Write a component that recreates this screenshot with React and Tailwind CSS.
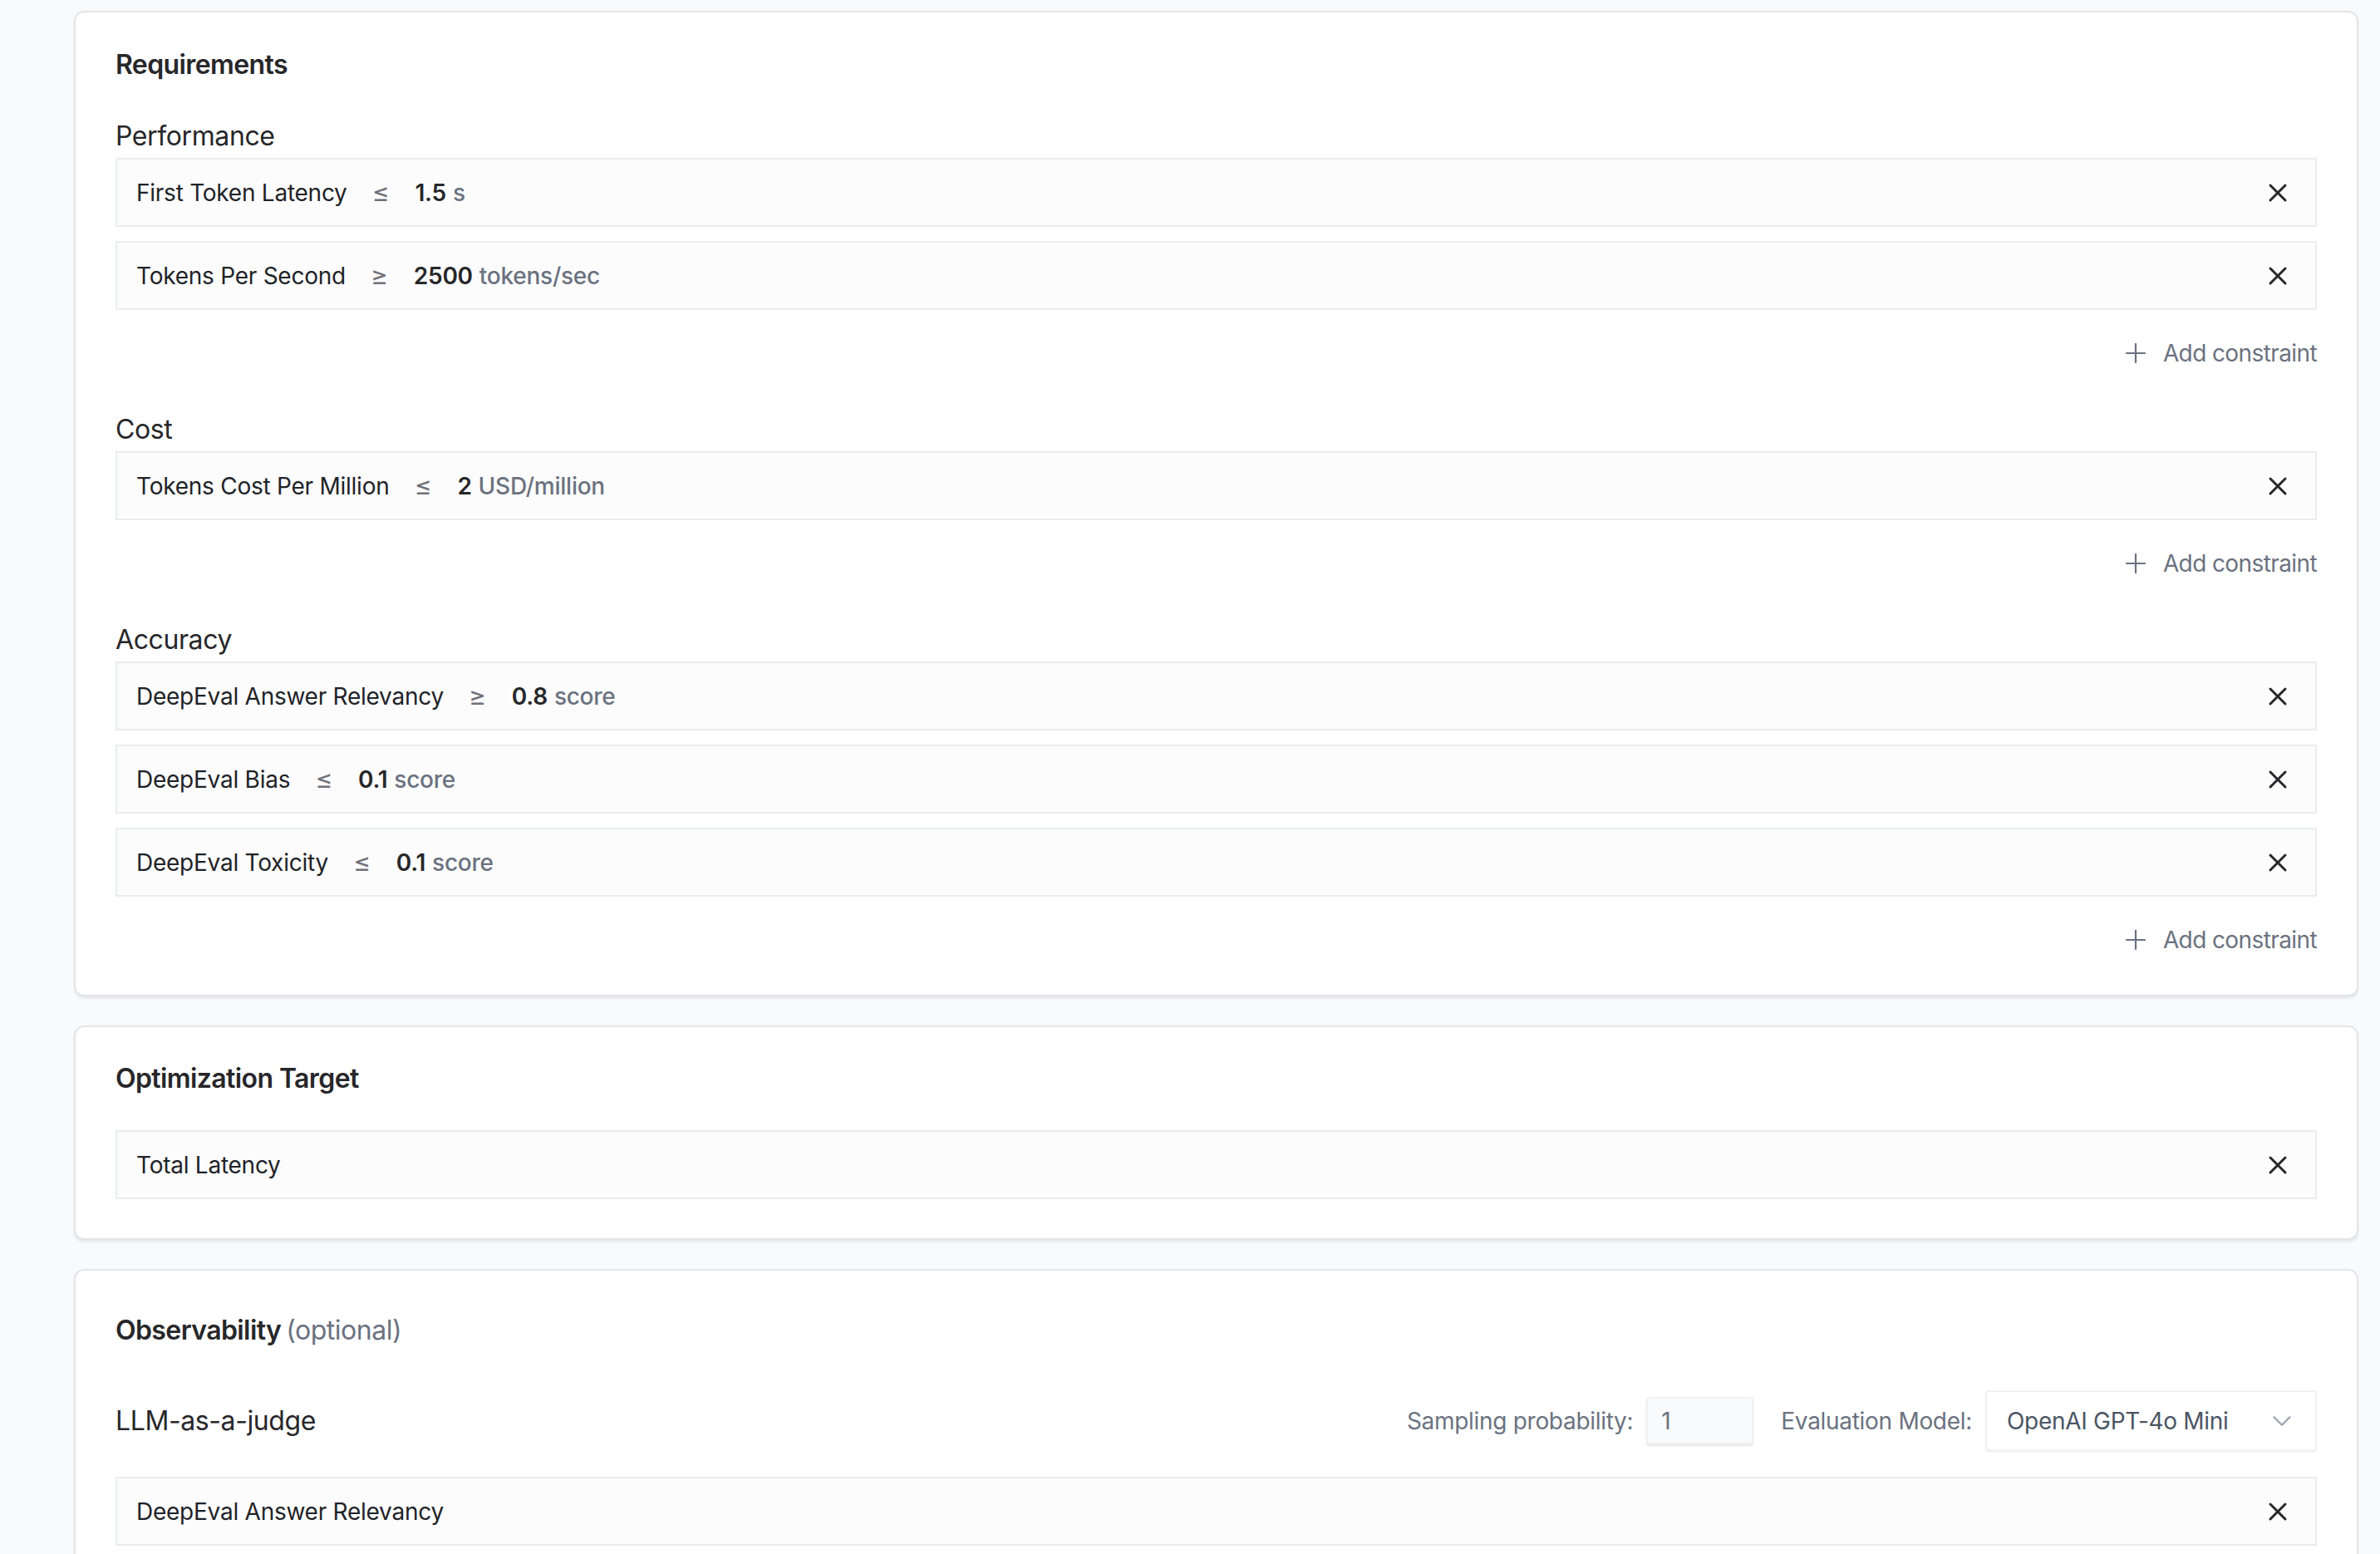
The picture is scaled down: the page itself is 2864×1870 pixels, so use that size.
import React from 'react';
import { X, Plus, ChevronDown } from 'lucide-react';

const SECTIONS = [
  {
    title: 'Performance',
    rows: [
      { label: 'First Token Latency', op: '≤', value: '1.5', unit: 's' },
      { label: 'Tokens Per Second', op: '≥', value: '2500', unit: 'tokens/sec' },
    ],
  },
  {
    title: 'Cost',
    rows: [{ label: 'Tokens Cost Per Million', op: '≤', value: '2', unit: 'USD/million' }],
  },
  {
    title: 'Accuracy',
    rows: [
      { label: 'DeepEval Answer Relevancy', op: '≥', value: '0.8', unit: 'score' },
      { label: 'DeepEval Bias', op: '≤', value: '0.1', unit: 'score' },
      { label: 'DeepEval Toxicity', op: '≤', value: '0.1', unit: 'score' },
    ],
  },
];

function Row({ children }) {
  return (
    <div className="h-[83px] flex items-center justify-between border-2 border-[#ebecf0] bg-[#fcfcfc] pl-[23px] pr-[27px]">
      <div className="flex items-center text-[28px] text-[#1f2328] tracking-[-0.25px]">{children}</div>
      <X size={36} strokeWidth={2} className="text-[#27272a]" />
    </div>
  );
}

function AddConstraint() {
  return (
    <div className="mt-[32px] h-[40px] flex items-center justify-end gap-[14px] text-[28px] text-[#6b7280] tracking-[-0.6px]">
      <Plus size={38} strokeWidth={1.4} className="text-[#6b7280]" />
      <span>Add constraint</span>
    </div>
  );
}

function Card({ children, className = '' }) {
  return (
    <div className={'rounded-[12px] border-2 border-[#e2e5e9] bg-white shadow-[0_3px_3px_rgba(0,0,0,0.07)] px-[48px] ' + className}>
      {children}
    </div>
  );
}

export default function App() {
  return (
    <div className="min-h-screen bg-[#f9fafb] pl-[89px] pr-[26px] pt-[13px]" style={{ fontFamily: 'Inter, "Noto Sans", sans-serif' }}>
      <div className="flex flex-col gap-[35px]">
        {/* Requirements */}
        <Card className="pt-[49px] pb-[46px]">
          <h2 className="h-[28px] flex items-center text-[32px] font-semibold text-[#27272a] tracking-[-0.6px]">Requirements</h2>
          {SECTIONS.map((s) => (
            <div key={s.title} className="mt-[52px]">
              <div className="h-[40px] flex items-center text-[32px] text-[#27272a] mb-[6px] tracking-[-0.4px]">{s.title}</div>
              <div className="flex flex-col gap-[17px]">
                {s.rows.map((r) => (
                  <Row key={r.label}>
                    <span>{r.label}</span>
                    <span className="ml-[30px] text-[32px] leading-none text-[#71717a]">{r.op}</span>
                    <span className="ml-[31px] font-semibold text-[#27272a]">{r.value}</span>
                    <span className="ml-[8px] font-medium text-[#6b7280]">{r.unit}</span>
                  </Row>
                ))}
              </div>
              <AddConstraint />
            </div>
          ))}
        </Card>

        {/* Optimization Target */}
        <Card className="pt-[48px] pb-[47px]">
          <h2 className="h-[28px] flex items-center text-[32px] font-semibold text-[#27272a] tracking-[-0.6px]">Optimization Target</h2>
          <div className="mt-[48px]">
            <Row>
              <span>Total Latency</span>
            </Row>
          </div>
        </Card>

        {/* Observability */}
        <Card className="pt-[49px] pb-[48px]">
          <h2 className="h-[46px] flex items-center text-[32px] text-[#27272a]">
            <span className="font-semibold tracking-[-0.6px]">Observability</span>
            <span className="ml-[6px] font-normal text-[#6b7280] tracking-[-0.5px]">(optional)</span>
          </h2>
          <div className="mt-[49px] flex items-center justify-between">
            <div className="text-[32px] text-[#27272a] tracking-[-0.4px]">LLM-as-a-judge</div>
            <div className="flex items-center text-[28px] text-[#6b7280] tracking-[-0.3px]">
              <span>Sampling probability:</span>
              <div className="ml-[16px] w-[129px] h-[57px] flex items-center pl-[16px] bg-[#f9fafb] border-2 border-[#f0f1f3] shadow-[0_2px_2px_rgba(0,0,0,0.1)] rounded-[4px] text-[#6b7280]">1</div>
              <span className="ml-[33px]">Evaluation Model:</span>
              <div className="ml-[16px] w-[399px] h-[73px] flex items-center justify-between pl-[24px] pr-[21px] bg-white border-2 border-[#eef0f2] shadow-[0_2px_2px_rgba(0,0,0,0.05)] rounded-[4px] text-[#4b5563]">
                <span>OpenAI GPT-4o Mini</span>
                <ChevronDown size={38} strokeWidth={1.4} className="text-[#9ca3af]" />
              </div>
            </div>
          </div>
          <div className="mt-[31px]">
            <Row>
              <span>DeepEval Answer Relevancy</span>
            </Row>
          </div>
        </Card>
      </div>
    </div>
  );
}
